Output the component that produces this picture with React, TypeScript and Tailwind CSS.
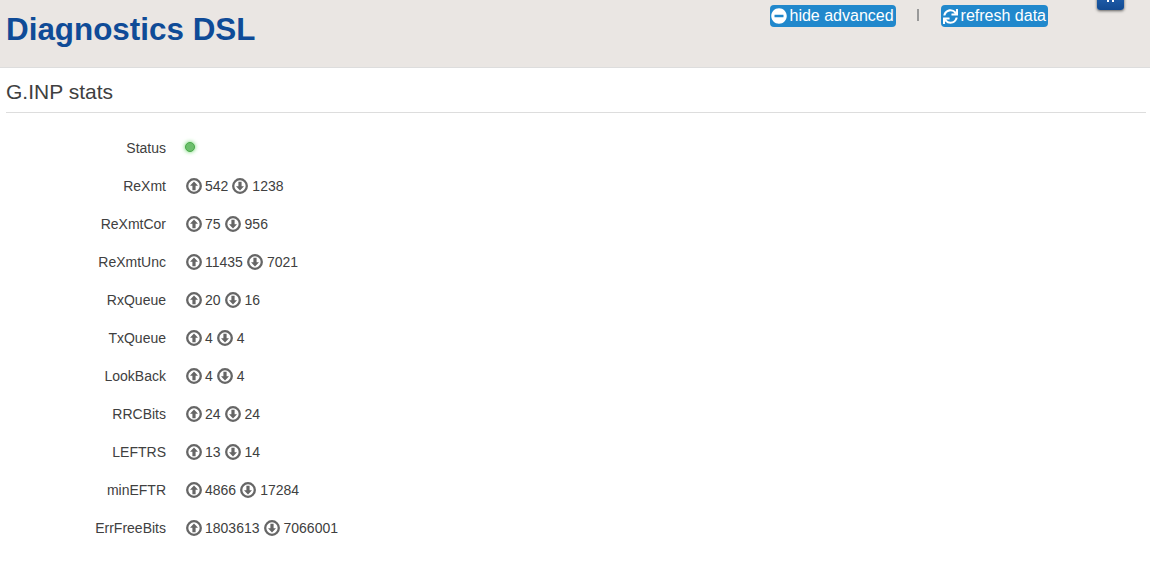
import { FaMinusCircle, FaSync } from 'react-icons/fa'

const rows = [
  { label: 'ReXmt', up: '542', down: '1238' },
  { label: 'ReXmtCor', up: '75', down: '956' },
  { label: 'ReXmtUnc', up: '11435', down: '7021' },
  { label: 'RxQueue', up: '20', down: '16' },
  { label: 'TxQueue', up: '4', down: '4' },
  { label: 'LookBack', up: '4', down: '4' },
  { label: 'RRCBits', up: '24', down: '24' },
  { label: 'LEFTRS', up: '13', down: '14' },
  { label: 'minEFTR', up: '4866', down: '17284' },
  { label: 'ErrFreeBits', up: '1803613', down: '7066001' },
]

function Arrow({ down = false }: { down?: boolean }) {
  return (
    <svg viewBox="0 0 16 16" className={down ? 'w-4 h-4 shrink-0 mx-[1px]' : 'w-4 h-4 shrink-0'}>
      <circle cx="8" cy="8" r="6.8" fill="none" stroke="#666" strokeWidth="2.3" />
      <path
        d={down ? 'M8 12.6 4 8.2H6.4V3.8H9.6V8.2H12Z' : 'M8 3.4 12 7.8H9.6V12.2H6.4V7.8H4Z'}
        fill="#666"
      />
    </svg>
  )
}

function Pill({ children }: { children: React.ReactNode }) {
  return (
    <span className="flex items-center h-[22px] pl-[1px] pr-[2px] gap-[3px] rounded-[4px] bg-[#2188cc] text-white text-base leading-none">
      {children}
    </span>
  )
}

export default function App() {
  return (
    <div className="w-[1150px] h-[561px] overflow-hidden bg-white text-[#404040] font-['Liberation_Sans',Arial,sans-serif]">
      <header className="relative flex h-[68px] justify-between bg-[#eae6e3] border-b border-[#dddddd] pl-[6px]">
        <h1 className="pt-[12px] text-[31.4px] leading-9 font-bold text-[#0f4b97]">Diagnostics DSL</h1>
        <div className="flex items-start pt-[5px] pr-[102px]">
          <Pill>
            <FaMinusCircle className="w-[16px] h-[16px] text-white" />
            hide advanced
          </Pill>
          <span className="ml-[21px] mr-[22px] mt-[4px] w-[2px] h-3 bg-[#999999]" />
          <Pill>
            <FaSync className="w-[15px] h-[15px] ml-[1px] text-white" />
            refresh data
          </Pill>
        </div>
        <div className="absolute right-[26px] -top-[8px] flex justify-center items-start gap-[3px] w-[27px] h-[18px] pt-[8px] rounded-[3px] bg-gradient-to-b from-[#2566b4] to-[#124a92] shadow-[0_1px_3px_rgba(0,0,0,0.6)]">
          <span className="w-[2px] h-[2px] bg-white" />
          <span className="w-[2px] h-[2px] bg-white" />
        </div>
      </header>
      <section className="px-[6px] pr-[4px]">
        <h2 className="h-[45px] pt-[12px] text-[21px] leading-6 border-b border-[#dddddd]">G.INP stats</h2>
        <div className="pt-[16px] text-sm">
          <div className="flex items-center h-[38px]">
            <span className="w-[160px] text-right">Status</span>
            <span className="ml-[19px] mb-[3px] w-[10px] h-[10px] rounded-full bg-[#6cbf6c] border border-[#4aa84a] shadow-[0_0_4px_#5fd35f]" />
          </div>
          {rows.map((row) => (
            <div key={row.label} className="flex items-center h-[38px]">
              <span className="w-[160px] text-right">{row.label}</span>
              <span className="ml-5 flex items-center gap-[3px]">
                <Arrow />
                {row.up}
                <Arrow down />
                {row.down}
              </span>
            </div>
          ))}
        </div>
      </section>
    </div>
  )
}
